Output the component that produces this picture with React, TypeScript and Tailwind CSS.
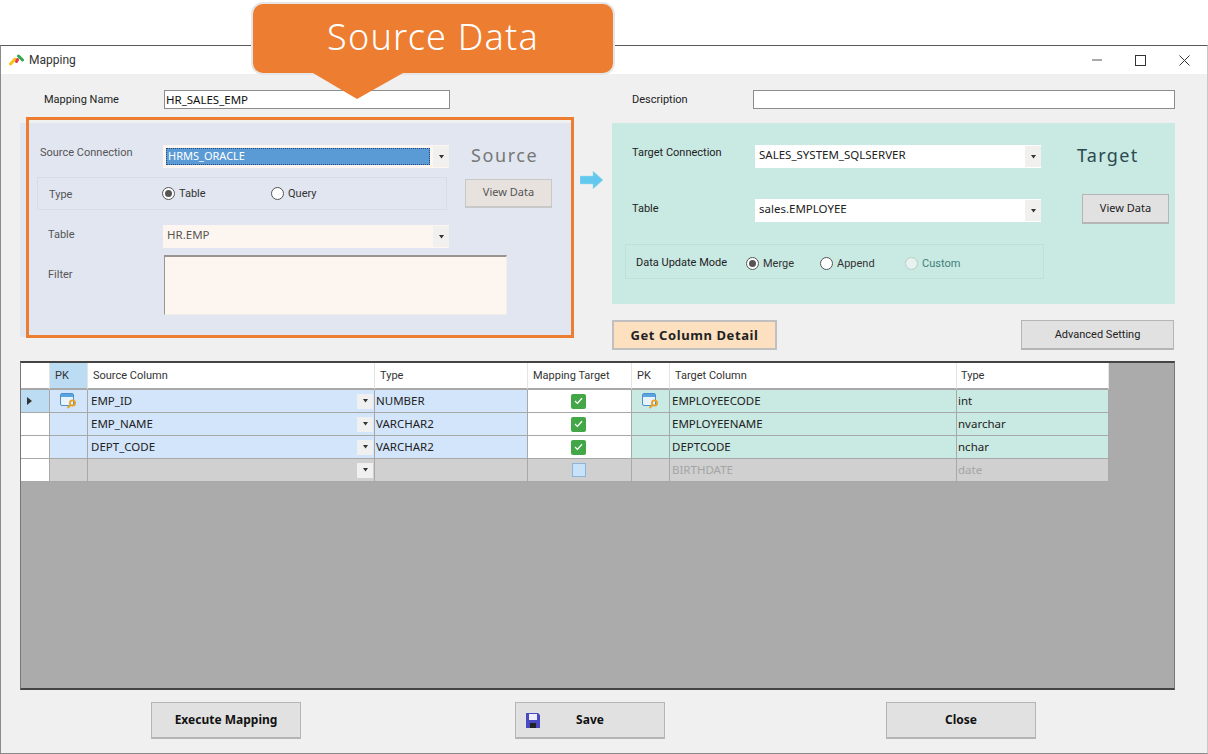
const ui = "font-['Noto_Sans',sans-serif]";
const lbl = "font-['Roboto',sans-serif] text-[11px]";

const Caret = () => (
  <svg width="7" height="4" viewBox="0 0 7 4"><path d="M1 0h5L3.5 3.5z" fill="#333" /></svg>
);

const Combo = ({ text, bg, selected, color }: { text: string; bg: string; selected?: boolean; color?: string }) => (
  <div className={`flex w-[286px] h-[23px] items-center ${bg}`}>
    {selected ? (
      <div className="ml-[3px] flex h-[17px] w-[264px] items-center border border-dotted border-[#26457a] bg-[#5b9bd5] pb-[1px] pl-[1px] text-[11px] text-white">{text}</div>
    ) : (
      <div className={`pb-[3px] pl-[4px] text-[11.5px] ${color ?? 'text-[#222]'}`}>{text}</div>
    )}
    <div className="ml-auto flex h-[21px] w-[16px] items-center justify-center bg-[#f2f0ee]">
      <Caret />
    </div>
  </div>
);

const Radio = ({ label, checked, muted, width }: { label: string; checked?: boolean; muted?: boolean; width: string }) => (
  <div className={`flex items-center ${width}`}>
    <span className={`flex h-[13px] w-[13px] items-center justify-center rounded-full border ${muted ? 'border-[#b8ccc8] bg-[#e8f3f0]' : 'border-[#555] bg-white'}`}>
      {checked && <span className="h-[7px] w-[7px] rounded-full bg-[#555]" />}
    </span>
    <span className={`ml-[4px] pt-[1px] ${lbl} ${muted ? 'text-[#3f7f78]' : 'text-[#333]'}`}>{label}</span>
  </div>
);

const KeyIcon = () => (
  <svg width="17" height="16" viewBox="0 0 17 16">
    <rect x="0.5" y="0.5" width="13" height="12" rx="1.5" fill="#e8f3fc" stroke="#4a90d0" />
    <rect x="1" y="1" width="12" height="3" fill="#5aa5e0" />
    <circle cx="12.5" cy="10" r="2.6" fill="none" stroke="#e8a020" strokeWidth="1.8" />
    <path d="M10.7 11.8 7.6 15" stroke="#e8a020" strokeWidth="1.8" />
  </svg>
);

const Check = ({ on }: { on: boolean }) =>
  on ? (
    <span className="mr-[2px] flex h-[15px] w-[15px] items-center justify-center rounded-[2px] bg-[#43a748]">
      <svg width="9" height="8" viewBox="0 0 9 8"><path d="M1 4l2.4 2.4L8 1.2" fill="none" stroke="#fff" strokeWidth="1.3" /></svg>
    </span>
  ) : (
    <span className="mr-[2px] h-[14px] w-[14px] border border-[#8fb4dc] bg-[#c8e2fa]" />
  );

const headers = [
  { t: '', c: 'bg-white' },
  { t: 'PK', c: 'bg-[#bcdcf4] pl-[5px]' },
  { t: 'Source Column', c: 'bg-white pl-[5px]' },
  { t: 'Type', c: 'bg-white pl-[5px]' },
  { t: 'Mapping Target', c: 'bg-white pl-[5px]' },
  { t: 'PK', c: 'bg-white pl-[5px]' },
  { t: 'Target Column', c: 'bg-white pl-[5px]' },
  { t: 'Type', c: 'bg-white pl-[4px]' },
];

const rows = [
  { src: 'EMP_ID', type: 'NUMBER', on: true, tgt: 'EMPLOYEECODE', ttype: 'int', key: true },
  { src: 'EMP_NAME', type: 'VARCHAR2', on: true, tgt: 'EMPLOYEENAME', ttype: 'nvarchar', key: false },
  { src: 'DEPT_CODE', type: 'VARCHAR2', on: true, tgt: 'DEPTCODE', ttype: 'nchar', key: false },
  { src: '', type: '', on: false, tgt: 'BIRTHDATE', ttype: 'date', key: false },
];

const cell = 'flex h-[23px] items-center border-r border-b border-[#a8a8a8] text-[11.5px]';
const gridCols = 'grid grid-cols-[29px_38px_287px_153px_104px_38px_287px_152px] w-[1088px]';

const Grid = () => (
  <div className="h-[329px] w-[1155px] border-t-2 border-l border-r border-b-2 border-t-[#444] border-l-[#777] border-r-[#777] border-b-[#444] bg-[#ababab]">
    <div className={gridCols}>
      {headers.map((h, i) => (
        <div key={i} className={`flex h-[27px] items-center border-r border-b-2 border-r-[#e4e4e4] border-b-[#a8a8a8] pt-[2px] ${lbl} text-[#333] ${h.c}`}>{h.t}</div>
      ))}
      {rows.map((r, i) => {
        const off = i === 3;
        return (
          <div key={i} className="contents">
            <div className={`${cell} justify-center pr-[11px] ${i === 0 ? 'bg-[#bcdcf4]' : 'bg-white'}`}>
              {i === 0 && <svg width="5" height="8" viewBox="0 0 5 8"><path d="M0 0l5 4-5 4z" fill="#333" /></svg>}
            </div>
            <div className={`${cell} justify-center ${off ? 'bg-[#d0d0d0]' : 'bg-[#d2e5fb]'}`}>{r.key && <KeyIcon />}</div>
            <div className={`${cell} pl-[3px] text-[#222] ${off ? 'bg-[#d0d0d0]' : 'bg-[#d2e5fb]'}`}>
              {r.src}
              <span className="ml-auto mr-[1px] flex h-[15px] w-[16px] items-center justify-center bg-[#f0f0f0]"><Caret /></span>
            </div>
            <div className={`${cell} pl-[1px] text-[#222] ${off ? 'bg-[#d0d0d0]' : 'bg-[#d2e5fb]'}`}>{r.type}</div>
            <div className={`${cell} justify-center ${off ? 'bg-[#d0d0d0]' : 'bg-white'}`}><Check on={r.on} /></div>
            <div className={`${cell} justify-center ${off ? 'bg-[#d0d0d0]' : 'bg-[#c9e9e3]'}`}>{r.key && <KeyIcon />}</div>
            <div className={`${cell} pl-[2px] ${off ? 'bg-[#d0d0d0] text-[#a5a5a5]' : 'bg-[#c9e9e3] text-[#222]'}`}>{r.tgt}</div>
            <div className={`${cell} pl-[1px] ${off ? 'bg-[#d0d0d0] text-[#a5a5a5]' : 'bg-[#c9e9e3] text-[#222]'}`}>{r.ttype}</div>
          </div>
        );
      })}
    </div>
  </div>
);

const FootBtn = ({ children }: { children: React.ReactNode }) => (
  <button className="relative flex h-[37px] w-[150px] items-center justify-center border border-[#b5b5b5] border-b-2 bg-[#e1e1e1] text-[12px] font-bold text-[#111]">
    {children}
  </button>
);

export default function App() {
  return (
    <div className={`relative h-[754px] w-[1208px] overflow-hidden bg-white pt-[45px] ${ui}`}>
      {/* callout */}
      <div className="absolute left-[251px] top-[2px] z-20 flex h-[73px] w-[364px] items-center justify-center rounded-[12px] border-2 border-[#e6e6e6] bg-[#ed7d31] pb-[3px] text-[36px] font-light tracking-[1.2px] text-white">
        Source Data
      </div>
      <svg className="absolute left-[313px] top-[73px] z-20" width="90" height="27" viewBox="0 0 90 27">
        <path d="M0 0h90L44 26z" fill="#ed7d31" />
      </svg>
      {/* orange outline */}
      <div className="pointer-events-none absolute left-[26px] top-[117px] z-10 h-[221px] w-[548px] border-[3px] border-[#ed7d31]" />

      <div className="flex h-[709px] flex-col border-t border-l border-b border-r border-t-[#5a5a5a] border-l-[#8a8a8a] border-b-[#8a8a8a] border-r-[#c8c8c8] bg-[#f0f0f0]">
        {/* title bar */}
        <div className="flex h-[28px] shrink-0 items-center bg-white pl-[8px]">
          <svg width="16" height="13" viewBox="0 0 16 13">
            <path d="M1.5 10 6 5" stroke="#f5c518" strokeWidth="3" strokeLinecap="round" />
            <path d="M7.5 7.5 8.5 5.5" stroke="#e8384f" strokeWidth="3" strokeLinecap="round" />
            <path d="M9.5 2 13.5 6" stroke="#2fa84f" strokeWidth="3" strokeLinecap="round" />
          </svg>
          <span className="ml-[4px] font-['Roboto',sans-serif] text-[12px] text-[#333]">Mapping</span>
          <div className="ml-auto flex items-center">
            <svg width="10" height="2" viewBox="0 0 10 2"><path d="M0 1h10" stroke="#555" strokeWidth="1" /></svg>
            <svg className="ml-[33px]" width="11" height="11" viewBox="0 0 11 11"><rect x="0.5" y="0.5" width="10" height="10" fill="none" stroke="#333" /></svg>
            <svg className="ml-[33px] mr-[17px]" width="11" height="11" viewBox="0 0 11 11"><path d="M.5.5l10 10M10.5.5l-10 10" stroke="#333" /></svg>
          </div>
        </div>

        {/* body */}
        <div className="flex pl-[19px] pt-[16px]">
          {/* source side */}
          <div className="w-[551px]">
            <div className="flex h-[19px] items-center pl-[24px]">
              <span className={`w-[120px] pt-[1px] ${lbl} text-[#222]`}>Mapping Name</span>
              <div className="flex h-[19px] w-[286px] items-center border border-[#8c8c8c] bg-white pl-[1px] text-[11.5px] text-[#111]">HR_SALES_EMP</div>
            </div>
            <div className="mt-[14px] h-[214px] bg-[#e1e6f1] pt-[22px]">
              <div className="flex h-[23px] items-start pl-[20px]">
                <span className={`w-[123px] ${lbl} text-[#555]`}>Source Connection</span>
                <Combo text="HRMS_ORACLE" bg="bg-[#fdf5ef]" selected />
                <span className="-mt-[3px] ml-[22px] text-[18px] leading-[27px] tracking-[1.6px] text-[#777]">Source</span>
              </div>
              <div className="mt-[9px] flex items-start pl-[17px]">
                <div className="flex h-[33px] w-[410px] items-center border border-[#d7dce6] pl-[11px]">
                  <span className={`w-[113px] pt-[3px] ${lbl} text-[#555]`}>Type</span>
                  <Radio label="Table" checked width="w-[109px]" />
                  <Radio label="Query" width="w-[70px]" />
                </div>
                <button className="ml-[18px] mt-[2px] h-[29px] w-[87px] border border-[#c8c8c8] border-b-2 bg-[#e8e2de] pb-[2px] text-[11px] text-[#555]">View Data</button>
              </div>
              <div className="mt-[15px] flex items-center pl-[28px]">
                <span className={`mb-[2px] w-[115px] ${lbl} text-[#555]`}>Table</span>
                <Combo text="HR.EMP" bg="bg-[#fdf5ef]" color="text-[#555]" />
              </div>
              <div className="mt-[7px] flex pl-[28px]">
                <span className={`mt-[12px] w-[116px] ${lbl} text-[#555]`}>Filter</span>
                <div className="h-[60px] w-[343px] border border-t-2 border-t-[#9a9490] border-l-[#9a9490] border-r-[#f2eeea] border-b-[#f2eeea] bg-[#fdf5ef]" />
              </div>
            </div>
          </div>

          {/* arrow between sides */}
          <div className="flex w-[41px] justify-center pt-[81px]">
            <svg className="ml-[1px]" width="24" height="18" viewBox="0 0 24 18">
              <path d="M0 5h13V0l10 9-10 9v-5H0z" fill="#62c8ee" stroke="#a8dcec" strokeWidth="0.5" />
            </svg>
          </div>

          {/* target side */}
          <div className="w-[563px]">
            <div className="flex h-[19px] items-center pl-[20px]">
              <span className={`w-[121px] pt-[1px] ${lbl} text-[#222]`}>Description</span>
              <div className="h-[19px] w-[422px] border border-[#8c8c8c] bg-white" />
            </div>
            <div className="mt-[14px] h-[181px] bg-[#c9e9e3] pt-[22px]">
              <div className="flex h-[23px] items-start pl-[20px]">
                <span className={`w-[123px] ${lbl} text-[#222]`}>Target Connection</span>
                <Combo text="SALES_SYSTEM_SQLSERVER" bg="bg-white" />
                <span className="-mt-[3px] ml-[36px] text-[18px] leading-[27px] tracking-[1.3px] text-[#2a4a50]">Target</span>
              </div>
              <div className="mt-[26px] flex items-start pl-[20px]">
                <span className={`mt-[7px] w-[123px] ${lbl} text-[#222]`}>Table</span>
                <div className="mt-[5px]"><Combo text="sales.EMPLOYEE" bg="bg-white" /></div>
                <button className="ml-[41px] h-[30px] w-[87px] border border-[#b5b5b5] border-b-2 bg-[#e1e1e1] text-[11px] text-[#222]">View Data</button>
              </div>
              <div className="ml-[13px] mt-[20px] flex h-[35px] w-[419px] items-center border border-[#bfdfd9] pl-[10px] pt-[4px]">
                <span className={`w-[110px] ${lbl} text-[#222]`}>Data Update Mode</span>
                <Radio label="Merge" checked width="w-[74px]" />
                <Radio label="Append" width="w-[85px]" />
                <Radio label="Custom" muted width="w-[70px]" />
              </div>
            </div>
            <div className="mt-[16px] flex items-center justify-between pr-[1px]">
              <button className="h-[30px] w-[165px] border-2 border-[#c0c0c0] bg-[#fde0c0] pt-[2px] text-[13px] font-bold tracking-[0.6px] text-[#222]">Get Column Detail</button>
              <button className={`h-[30px] w-[153px] border border-[#b5b5b5] border-b-2 bg-[#e1e1e1] pt-[2px] ${lbl} text-[#222]`}>Advanced Setting</button>
            </div>
          </div>
        </div>

        <div className="pl-[19px] pt-[11px]">
          <Grid />
        </div>

        {/* footer buttons */}
        <div className="flex pl-[150px] pt-[12px]">
          <FootBtn>Execute Mapping</FootBtn>
          <div className="ml-[214px]">
            <FootBtn>
              <svg className="absolute left-[10px] top-[10px]" width="14" height="15" viewBox="0 0 14 15">
                <path d="M0 0h12l2 2v13H0z" fill="#4a4ac0" />
                <rect x="3" y="1" width="8" height="6" fill="#eef" />
                <rect x="4" y="10" width="6" height="5" fill="#222" />
              </svg>
              Save
            </FootBtn>
          </div>
          <div className="ml-[221px]">
            <FootBtn>Close</FootBtn>
          </div>
        </div>
      </div>
    </div>
  );
}
